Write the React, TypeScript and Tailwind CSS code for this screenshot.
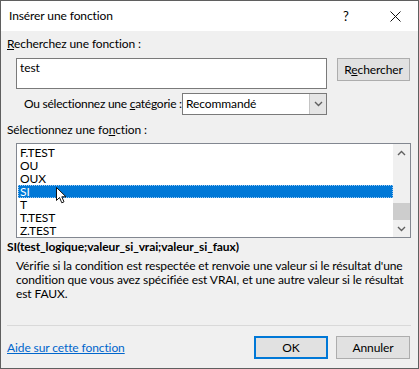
import React from "react";

const font = { fontFamily: 'Lato, "Liberation Sans", sans-serif' };

const items = ["F.TEST", "OU", "OUX", "SI", "T", "T.TEST", "Z.TEST"];

function Chevron({ up }: { up?: boolean }) {
  return (
    <svg width="9" height="6" viewBox="0 0 9 6">
      <path
        d={up ? "M1 5 L4.5 1.5 L8 5" : "M1 1 L4.5 4.5 L8 1"}
        fill="none"
        stroke="#606060"
        strokeWidth="1.4"
      />
    </svg>
  );
}

export default function App() {
  return (
    <div
      className="w-[419px] h-[369px] border border-[#5f5f5f] bg-[#f0f0f0] text-[12px] leading-[14px] tracking-[-0.1px] text-black flex flex-col overflow-hidden whitespace-nowrap"
      style={font}
    >
      {/* Title bar */}
      <div className="h-[30px] bg-white flex items-center pl-[8px] shrink-0">
        <span className="flex-1 text-[12px]">Insérer une fonction</span>
        <span className="w-[10px] text-[13px] mr-[37px]">?</span>
        <svg width="11" height="11" viewBox="0 0 11 11" className="mr-[17px]">
          <path d="M0.5 0.5 L10.5 10.5 M10.5 0.5 L0.5 10.5" stroke="#111" strokeWidth="1" />
        </svg>
      </div>

      {/* Body */}
      <div className="flex flex-col px-[6px] pt-[6px]">
        <div className="h-[14px]">
          <span className="underline">R</span>echerchez une fonction :
        </div>

        <div className="flex items-start mt-[7px]">
          <div className="ml-[9px] w-[311px] h-[31px] border border-[#7a7a7a] bg-white pl-[3px] pt-[2px]">
            test
          </div>
          <button className="ml-[10px] w-[73px] h-[23px] border border-[#adadad] bg-[#e1e1e1] text-[12px]">
            R<span className="underline">e</span>chercher
          </button>
        </div>

        <div className="flex items-center mt-[4px] h-[22px]">
          <span className="ml-[17px] w-[158px] tracking-[-0.25px]">
            Ou sélectionnez une <span className="underline">c</span>atégorie :
          </span>
          <div className="w-[145px] h-[22px] border border-[#7a7a7a] bg-white flex items-center">
            <span className="flex-1 pl-[3px]">Recommandé</span>
            <div className="w-[17px] h-[20px] bg-[#e5e5e5] border-l border-[#c4c4c4] flex items-center justify-center">
              <Chevron />
            </div>
          </div>
        </div>

        <div className="h-[14px] mt-[8px]">
          Sélectionnez une fo<span className="underline">n</span>ction :
        </div>

        {/* Function list */}
        <div className="ml-[9px] mt-[6px] w-[395px] h-[95px] border border-[#828790] bg-white flex">
          <div className="flex-1 pt-[2px] pl-[1px]">
            {items.map((it) =>
              it === "SI" ? (
                <div
                  key={it}
                  className="relative h-[13px] leading-[13px] bg-[#0078d7] text-white pl-[2px] outline outline-1 outline-dotted outline-[#9fc9ef] -outline-offset-1"
                >
                  {it}
                  <svg
                    width="12"
                    height="18"
                    viewBox="0 0 12 18"
                    className="absolute left-[38px] top-[2px]"
                  >
                    <path
                      d="M0.5 0.5 L0.5 13.5 L3.5 10.5 L5.8 15.8 L8 14.8 L5.8 9.8 L10 9.8 Z"
                      fill="white"
                      stroke="#111"
                      strokeWidth="1"
                    />
                  </svg>
                </div>
              ) : (
                <div key={it} className="h-[13px] leading-[13px] pl-[2px]">
                  {it}
                </div>
              )
            )}
          </div>
          <div className="w-[17px] bg-[#f0f0f0] flex flex-col items-center">
            <div className="h-[17px] flex items-center justify-center">
              <Chevron up />
            </div>
            <div className="flex-1 w-full flex flex-col justify-end">
              <div className="h-[17px] bg-[#cdcdcd]" />
            </div>
            <div className="h-[17px] flex items-center justify-center">
              <Chevron />
            </div>
          </div>
        </div>

        <div className="mt-[2px] h-[14px] font-bold">
          SI(test_logique;valeur_si_vrai;valeur_si_faux)
        </div>

        <div className="ml-[9px] mt-[5px]">
          <div>Vérifie si la condition est respectée et renvoie une valeur si le résultat d'une</div>
          <div>condition que vous avez spécifiée est VRAI, et une autre valeur si le résultat</div>
          <div>est FAUX.</div>
        </div>

        <div className="mt-[24px] h-px bg-[#d9d9d9] w-[404px]" />

        <div className="flex items-center mt-[10px]">
          <span className="flex-1 text-[#0066cc] underline">Aide sur cette fonction</span>
          <button className="w-[74px] h-[23px] border-2 border-[#0078d7] bg-[#e1e1e1] text-[12px]">
            OK
          </button>
          <button className="ml-[8px] mr-[2px] w-[74px] h-[23px] border border-[#adadad] bg-[#e1e1e1] text-[12px]">
            Annuler
          </button>
        </div>
      </div>
    </div>
  );
}
